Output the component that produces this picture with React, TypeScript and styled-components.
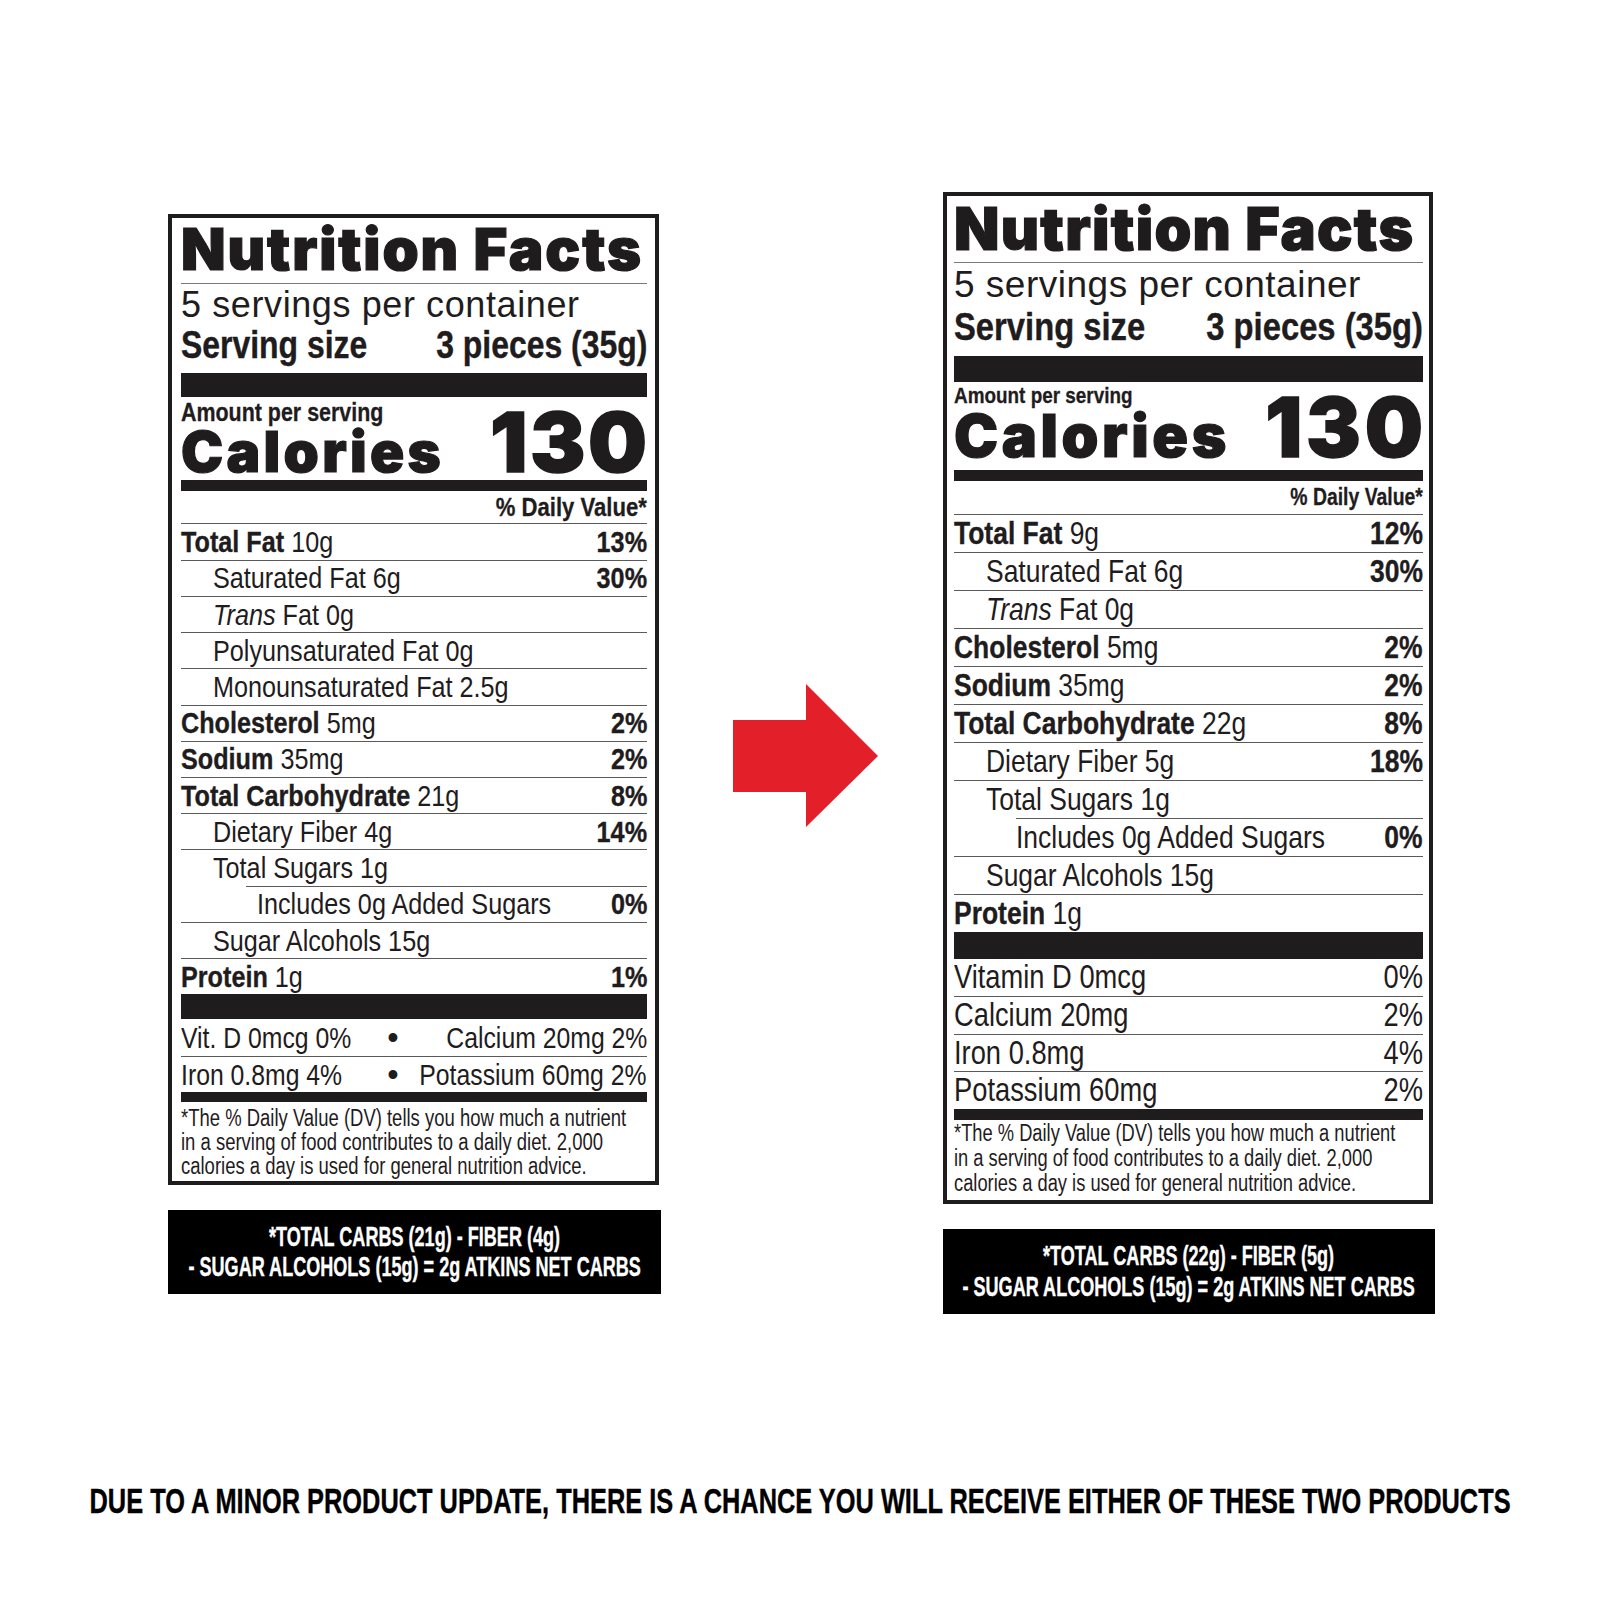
import React from "react";
import styled, { createGlobalStyle } from "styled-components";

const INK = "#1f1c1d";
const RULE = "#5a5a5a";
const SANS = `"Liberation Sans", Arial, sans-serif`;
const HEAVY = `Inter, Lato, "Liberation Sans", sans-serif`;

const GlobalStyle = createGlobalStyle`
  html, body { margin: 0; padding: 0; background: #fff; }
  * { box-sizing: border-box; }
`;

type Spec = {
  w: number; pl: number; pr: number;
  titleSize: number; titlePt: number; titlePb: number; titleLs: number;
  servSize: number; servLs: number; servPt: number;
  sizeSize: number; sizeLh: number; sizeK: number;
  bar1Mt: number; bar1: number;
  amtSize: number; amtK: number; amtPt: number;
  calSize: number; calLs: number; bigSize: number; bigLs: number;
  bar2Mt: number; bar2: number;
  dvH: number; dvSize: number; dvK: number;
  rowH: number; rowSize: number; rowK: number;
  ind1: number; ind2Line: number; ind2Text: number;
  bar3: number;
  vitHeights: number[]; vitSize: number; vitK: number;
  bar4: number;
  noteSize: number; noteK: number; noteLh: number; notePt: number; notePb: number;
  netPad: number; netLh: number;
};

type Nutrient = {
  name: string;
  amt?: string;
  dv?: string;
  bold?: boolean;
  trans?: boolean;
  level?: 0 | 1 | 2;
};

const Page = styled.main`
  width: 1600px;
  min-height: 1600px;
  background: #fff;
  display: flex;
  flex-direction: column;
`;

const Panels = styled.div`
  display: flex;
  align-items: flex-start;
  padding: 192px 0 0 168px;
`;

const Column = styled.div<{ $mt: number; $ml: number; $w: number }>`
  flex: none;
  display: flex;
  flex-direction: column;
  gap: 25px;
  width: ${(p) => p.$w}px;
  margin-top: ${(p) => p.$mt}px;
  margin-left: ${(p) => p.$ml}px;
`;

const ArrowSvg = styled.svg`
  flex: none;
  margin-top: 492px;
  margin-left: 72px;
  width: 145px;
  height: 143px;
`;

/* horizontally condensed text (stands in for a condensed typeface) */
const Squeeze = styled.span<{ $k: number; $o?: "left" | "right" | "center"; $grow?: boolean }>`
  display: inline-block;
  white-space: nowrap;
  transform: scaleX(${(p) => p.$k});
  transform-origin: ${(p) => p.$o ?? "left"} center;
  ${(p) => (p.$grow ? "flex: 1 1 0; min-width: 0;" : "flex: none;")}
`;

const Label = styled.section<{ $w: number; $pl: number; $pr: number }>`
  width: ${(p) => p.$w}px;
  border: 4px solid ${INK};
  padding: 0 ${(p) => p.$pr}px 0 ${(p) => p.$pl}px;
  display: flex;
  flex-direction: column;
  color: ${INK};
  background: #fff;
`;

const Title = styled.h1<{ $size: number; $pt: number; $pb: number; $ls: number }>`
  margin: 0;
  font-family: ${HEAVY};
  font-weight: 900;
  font-size: ${(p) => p.$size}px;
  letter-spacing: ${(p) => p.$ls}px;
  -webkit-text-stroke: 1.2px ${INK};
  line-height: 52px;
  padding: ${(p) => p.$pt}px 0 ${(p) => p.$pb}px;
  border-bottom: 1px solid #7a7a7a;
  white-space: nowrap;
`;

const Servings = styled.div<{ $size: number; $ls: number; $pt: number }>`
  font-family: ${SANS};
  font-weight: 400;
  font-size: ${(p) => p.$size}px;
  letter-spacing: ${(p) => p.$ls}px;
  line-height: 40px;
  padding-top: ${(p) => p.$pt}px;
  white-space: nowrap;
`;

const SizeRow = styled.div<{ $size: number; $lh: number }>`
  display: flex;
  justify-content: space-between;
  font-family: ${SANS};
  font-weight: 700;
  font-size: ${(p) => p.$size}px;
  line-height: ${(p) => p.$lh}px;
  -webkit-text-stroke: 0.4px ${INK};
`;

const Bar = styled.div<{ $h: number; $mt?: number }>`
  flex: none;
  height: ${(p) => p.$h}px;
  margin-top: ${(p) => p.$mt ?? 0}px;
  background: ${INK};
`;

const CalBlock = styled.div<{ $pt: number }>`
  display: flex;
  justify-content: space-between;
  align-items: last baseline;
  padding-top: ${(p) => p.$pt}px;
`;

const CalLeft = styled.div`
  display: flex;
  flex-direction: column;
`;

const Amount = styled.div<{ $size: number }>`
  font-family: ${SANS};
  font-weight: 700;
  font-size: ${(p) => p.$size}px;
  line-height: 22px;
  margin-bottom: 2px;
  -webkit-text-stroke: 0.3px ${INK};
`;

const CalWord = styled.div<{ $size: number; $ls: number }>`
  font-family: ${HEAVY};
  font-weight: 900;
  font-size: ${(p) => p.$size}px;
  letter-spacing: ${(p) => p.$ls}px;
  -webkit-text-stroke: 1.2px ${INK};
  line-height: 54px;
  white-space: nowrap;
`;

const BigNum = styled.div<{ $size: number; $ls: number }>`
  font-family: ${HEAVY};
  font-weight: 900;
  font-size: ${(p) => p.$size}px;
  letter-spacing: ${(p) => p.$ls}px;
  margin-right: -${(p) => p.$ls}px;
  -webkit-text-stroke: 1.4px ${INK};
  line-height: 54px;
  white-space: nowrap;
`;

const DvHead = styled.div<{ $h: number; $size: number }>`
  height: ${(p) => p.$h}px;
  display: flex;
  align-items: center;
  justify-content: flex-end;
  font-family: ${SANS};
  font-weight: 700;
  font-size: ${(p) => p.$size}px;
  line-height: 1;
  -webkit-text-stroke: 0.3px ${INK};
`;

const NRow = styled.div<{ $h: number; $size: number; $line: number; $text: number; $rule: boolean }>`
  height: ${(p) => p.$h}px;
  margin-left: ${(p) => p.$line}px;
  padding-left: ${(p) => p.$text}px;
  border-top: ${(p) => (p.$rule ? `1px solid ${RULE}` : "none")};
  display: flex;
  align-items: center;
  justify-content: space-between;
  font-family: ${SANS};
  font-weight: 400;
  font-size: ${(p) => p.$size}px;
  line-height: 1;
`;

const VitCell = styled.span<{ $basis?: number; $end?: boolean }>`
  display: flex;
  min-width: 0;
  flex: ${(p) => (p.$basis ? `0 0 ${p.$basis}px` : "1 1 0")};
  justify-content: ${(p) => (p.$end ? "flex-end" : "flex-start")};
`;

const Dot = styled.span`
  flex: 0 0 24px;
  text-align: center;
  font-size: 1.1em;
`;

const Strong = styled.b`
  font-weight: 700;
  -webkit-text-stroke: 0.35px ${INK};
`;

const Slant = styled.i`
  font-style: italic;
`;

const Note = styled.p<{ $size: number; $lh: number; $pt: number; $pb: number }>`
  margin: 0;
  font-family: ${SANS};
  font-weight: 400;
  font-size: ${(p) => p.$size}px;
  line-height: ${(p) => p.$lh}px;
  padding: ${(p) => p.$pt}px 0 ${(p) => p.$pb}px;
`;

const NoteLine = styled.span<{ $k: number }>`
  display: block;
  white-space: nowrap;
  transform: scaleX(${(p) => p.$k});
  transform-origin: left center;
`;

const NetCarbs = styled.div<{ $pad: number; $lh: number }>`
  background: #000;
  color: #fff;
  display: flex;
  flex-direction: column;
  align-items: center;
  padding: ${(p) => p.$pad}px 0;
  font-family: ${SANS};
  font-weight: 700;
  font-size: 28px;
  line-height: ${(p) => p.$lh}px;
  -webkit-text-stroke: 0.4px #fff;
`;

const NetLine = styled.span`
  flex: none;
  white-space: nowrap;
  transform: scaleX(0.645);
  transform-origin: center;
`;

const DisclaimerWrap = styled.div`
  margin-top: 167px;
  display: flex;
  justify-content: center;
`;

const DisclaimerText = styled.p`
  flex: none;
  margin: 0;
  font-family: ${SANS};
  font-weight: 700;
  font-size: 35px;
  line-height: 40px;
  color: #000;
  white-space: nowrap;
  -webkit-text-stroke: 0.4px #000;
  transform: scaleX(0.725);
  transform-origin: center;
`;

const leftSpec: Spec = {
  w: 491, pl: 9, pr: 8,
  titleSize: 58, titlePt: 5, titlePb: 8, titleLs: 1.9,
  servSize: 36, servLs: 0.6, servPt: 0.5,
  sizeSize: 38, sizeLh: 40, sizeK: 0.84,
  bar1Mt: 8.5, bar1: 24,
  amtSize: 25.5, amtK: 0.84, amtPt: 4.2,
  calSize: 56.5, calLs: 3.3, bigSize: 83, bigLs: 2.5,
  bar2Mt: 1.3, bar2: 11,
  dvH: 32, dvSize: 26.3, dvK: 0.84,
  rowH: 36.23, rowSize: 30, rowK: 0.84,
  ind1: 32, ind2Line: 65, ind2Text: 11,
  bar3: 25,
  vitHeights: [37, 36], vitSize: 29.5, vitK: 0.84,
  bar4: 10,
  noteSize: 23.5, noteK: 0.786, noteLh: 24, notePt: 3.9, notePb: 3.1,
  netPad: 12, netLh: 30,
};

const rightSpec: Spec = {
  w: 490, pl: 7, pr: 6,
  titleSize: 59, titlePt: 6.5, titlePb: 7.5, titleLs: 1.3,
  servSize: 37, servLs: 0.5, servPt: 2.2,
  sizeSize: 39, sizeLh: 44, sizeK: 0.84,
  bar1Mt: 6.8, bar1: 26,
  amtSize: 22.5, amtK: 0.84, amtPt: 3.2,
  calSize: 59, calLs: 3.6, bigSize: 82, bigLs: 3.8,
  bar2Mt: 6.8, bar2: 11,
  dvH: 33, dvSize: 23.1, dvK: 0.84,
  rowH: 38, rowSize: 31.5, rowK: 0.84,
  ind1: 32, ind2Line: 62, ind2Text: 0,
  bar3: 27,
  vitHeights: [37.5, 37.5, 37.5, 37.5], vitSize: 32.5, vitK: 0.84,
  bar4: 11,
  noteSize: 23.3, noteK: 0.786, noteLh: 25, notePt: 1.4, notePb: 3.6,
  netPad: 11.5, netLh: 31,
};

const leftRows: Nutrient[] = [
  { name: "Total Fat", amt: "10g", dv: "13%", bold: true },
  { name: "Saturated Fat", amt: "6g", dv: "30%", level: 1 },
  { name: "Fat", amt: "0g", trans: true, level: 1 },
  { name: "Polyunsaturated Fat", amt: "0g", level: 1 },
  { name: "Monounsaturated Fat", amt: "2.5g", level: 1 },
  { name: "Cholesterol", amt: "5mg", dv: "2%", bold: true },
  { name: "Sodium", amt: "35mg", dv: "2%", bold: true },
  { name: "Total Carbohydrate", amt: "21g", dv: "8%", bold: true },
  { name: "Dietary Fiber", amt: "4g", dv: "14%", level: 1 },
  { name: "Total Sugars", amt: "1g", level: 1 },
  { name: "Includes 0g Added Sugars", dv: "0%", level: 2 },
  { name: "Sugar Alcohols", amt: "15g", level: 1 },
  { name: "Protein", amt: "1g", dv: "1%", bold: true },
];

const rightRows: Nutrient[] = [
  { name: "Total Fat", amt: "9g", dv: "12%", bold: true },
  { name: "Saturated Fat", amt: "6g", dv: "30%", level: 1 },
  { name: "Fat", amt: "0g", trans: true, level: 1 },
  { name: "Cholesterol", amt: "5mg", dv: "2%", bold: true },
  { name: "Sodium", amt: "35mg", dv: "2%", bold: true },
  { name: "Total Carbohydrate", amt: "22g", dv: "8%", bold: true },
  { name: "Dietary Fiber", amt: "5g", dv: "18%", level: 1 },
  { name: "Total Sugars", amt: "1g", level: 1 },
  { name: "Includes 0g Added Sugars", dv: "0%", level: 2 },
  { name: "Sugar Alcohols", amt: "15g", level: 1 },
  { name: "Protein", amt: "1g", bold: true },
];

type Pair = [string, string];
const leftVits: Pair[] = [
  ["Vit. D 0mcg 0%", "Calcium 20mg 2%"],
  ["Iron 0.8mg 4%", "Potassium 60mg 2%"],
];
const rightVits: Pair[] = [
  ["Vitamin D 0mcg", "0%"],
  ["Calcium 20mg", "2%"],
  ["Iron 0.8mg", "4%"],
  ["Potassium 60mg", "2%"],
];

function NutrientName({ n }: { n: Nutrient }) {
  if (n.trans) {
    return (
      <>
        <Slant>Trans</Slant> {n.name} {n.amt}
      </>
    );
  }
  return (
    <>
      {n.bold ? <Strong>{n.name}</Strong> : n.name}
      {n.amt ? ` ${n.amt}` : ""}
    </>
  );
}

function NutritionLabel({
  s, rows, carbs, fiber, pairs, list,
}: {
  s: Spec; rows: Nutrient[]; carbs: string; fiber: string;
  pairs?: Pair[]; list?: Pair[];
}) {
  return (
    <>
      <Label $w={s.w} $pl={s.pl} $pr={s.pr}>
        <Title $size={s.titleSize} $pt={s.titlePt} $pb={s.titlePb} $ls={s.titleLs}>
          Nutrition Facts
        </Title>
        <Servings $size={s.servSize} $ls={s.servLs} $pt={s.servPt}>
          5 servings per container
        </Servings>
        <SizeRow $size={s.sizeSize} $lh={s.sizeLh}>
          <Squeeze $k={s.sizeK} $grow>Serving size</Squeeze>
          <Squeeze $k={s.sizeK} $o="right">3 pieces (35g)</Squeeze>
        </SizeRow>
        <Bar $h={s.bar1} $mt={s.bar1Mt} />
        <CalBlock $pt={s.amtPt}>
          <CalLeft>
            <Amount $size={s.amtSize}>
              <Squeeze $k={s.amtK}>Amount per serving</Squeeze>
            </Amount>
            <CalWord $size={s.calSize} $ls={s.calLs}>Calories</CalWord>
          </CalLeft>
          <BigNum $size={s.bigSize} $ls={s.bigLs}>130</BigNum>
        </CalBlock>
        <Bar $h={s.bar2} $mt={s.bar2Mt} />
        <DvHead $h={s.dvH} $size={s.dvSize}>
          <Squeeze $k={s.dvK} $o="right">% Daily Value*</Squeeze>
        </DvHead>
        {rows.map((n, i) => {
          const lvl = n.level ?? 0;
          const line = lvl === 2 ? s.ind2Line : 0;
          const text = lvl === 2 ? s.ind2Text : lvl === 1 ? s.ind1 : 0;
          return (
            <NRow key={i} $h={s.rowH} $size={s.rowSize} $line={line} $text={text} $rule>
              <Squeeze $k={s.rowK} $grow>
                <NutrientName n={n} />
              </Squeeze>
              {n.dv ? (
                <Squeeze $k={s.rowK} $o="right">
                  <Strong>{n.dv}</Strong>
                </Squeeze>
              ) : null}
            </NRow>
          );
        })}
        <Bar $h={s.bar3} />
        {pairs &&
          pairs.map((p, i) => (
            <NRow key={i} $h={s.vitHeights[i]} $size={s.vitSize} $line={0} $text={0} $rule={i > 0}>
              <VitCell $basis={200}>
                <Squeeze $k={s.vitK}>{p[0]}</Squeeze>
              </VitCell>
              <Dot>•</Dot>
              <VitCell $end>
                <Squeeze $k={s.vitK} $o="right">{p[1]}</Squeeze>
              </VitCell>
            </NRow>
          ))}
        {list &&
          list.map((p, i) => (
            <NRow key={i} $h={s.vitHeights[i]} $size={s.vitSize} $line={0} $text={0} $rule={i > 0}>
              <Squeeze $k={s.vitK} $grow>{p[0]}</Squeeze>
              <Squeeze $k={s.vitK} $o="right">{p[1]}</Squeeze>
            </NRow>
          ))}
        <Bar $h={s.bar4} />
        <Note $size={s.noteSize} $lh={s.noteLh} $pt={s.notePt} $pb={s.notePb}>
          <NoteLine $k={s.noteK}>*The % Daily Value (DV) tells you how much a nutrient</NoteLine>
          <NoteLine $k={s.noteK}>in a serving of food contributes to a daily diet. 2,000</NoteLine>
          <NoteLine $k={s.noteK}>calories a day is used for general nutrition advice.</NoteLine>
        </Note>
      </Label>
      <NetCarbs $pad={s.netPad} $lh={s.netLh}>
        <NetLine>*TOTAL CARBS ({carbs}) - FIBER ({fiber})</NetLine>
        <NetLine>- SUGAR ALCOHOLS (15g) = 2g ATKINS NET CARBS</NetLine>
      </NetCarbs>
    </>
  );
}

export default function App() {
  return (
    <Page>
      <GlobalStyle />
      <Panels>
        <Column $mt={22} $ml={0} $w={493}>
          <NutritionLabel s={leftSpec} rows={leftRows} carbs="21g" fiber="4g" pairs={leftVits} />
        </Column>
        <ArrowSvg viewBox="0 0 145 143" aria-hidden="true">
          <polygon points="0,36 73,36 73,0 145,72 73,143 73,108 0,108" fill="#e3202a" />
        </ArrowSvg>
        <Column $mt={0} $ml={65} $w={492}>
          <NutritionLabel s={rightSpec} rows={rightRows} carbs="22g" fiber="5g" list={rightVits} />
        </Column>
      </Panels>
      <DisclaimerWrap>
        <DisclaimerText>
          DUE TO A MINOR PRODUCT UPDATE, THERE IS A CHANCE YOU WILL RECEIVE EITHER OF THESE TWO PRODUCTS
        </DisclaimerText>
      </DisclaimerWrap>
    </Page>
  );
}
